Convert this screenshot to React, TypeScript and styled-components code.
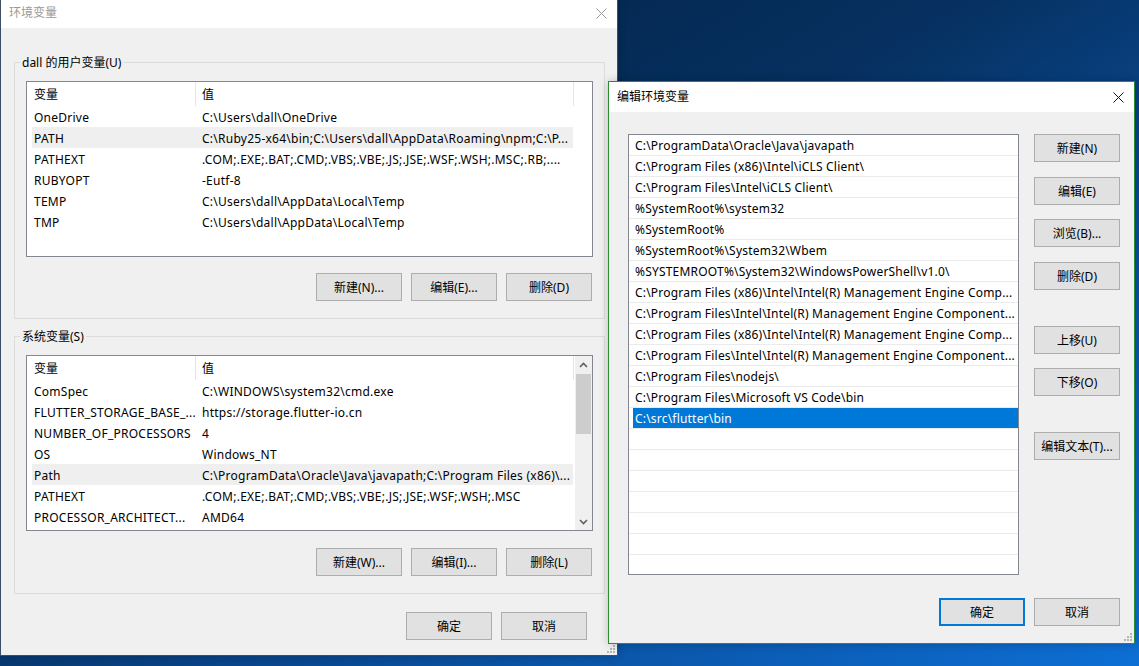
import React, { FC } from "react"
import styled, { createGlobalStyle } from "styled-components"

const GlobalStyle = createGlobalStyle`
  html, body {
    margin: 0;
    padding: 0;
  }
  body {
    font-family: "Noto Sans", "Noto Sans CJK SC", sans-serif;
    font-size: 12px;
    color: #000;
  }
`

const Desktop = styled.div`
  position: relative;
  width: 1139px;
  height: 666px;
  overflow: hidden;
  background: linear-gradient(to bottom right, #031f40 0%, #06305f 42%, #0a4d9a 68%, #0d6fd4 100%);
`

// windows sit on the desktop at their own coordinates
const Window = styled.div<{ $x: number; $y: number; $w: number; $h: number; $active?: boolean }>`
  position: absolute;
  left: ${p => p.$x}px;
  top: ${p => p.$y}px;
  width: ${p => p.$w}px;
  height: ${p => p.$h}px;
  box-sizing: border-box;
  border: 1px solid ${p => (p.$active ? "#2e8b34" : "#3d4f66")};
  background: #f0f0f0;
  display: flex;
  flex-direction: column;
  box-shadow: 0 0 8px rgba(0, 0, 0, 0.22);
`

const TitleBar = styled.div<{ $active?: boolean }>`
  flex: none;
  height: 30px;
  background: #fff;
  display: flex;
  align-items: center;
  justify-content: space-between;
  padding: 0 10px 0 8px;
  color: ${p => (p.$active ? "#000" : "#999")};
`

const Title = styled.span`
  font-size: 12px;
  line-height: 16px;
`

const Grip = styled.svg`
  position: absolute;
  right: 2px;
  bottom: 2px;
`

const LeftBody = styled.div`
  flex: 1;
  display: flex;
  flex-direction: column;
  padding: 26px 12px 0 13px;
`

const Group = styled.fieldset<{ $top: number }>`
  margin: ${p => p.$top}px 0 0 0;
  padding: 11px 11px 17px 11px;
  border: 1px solid #dcdcdc;
  min-width: 0;
`

const GroupLabel = styled.legend`
  margin-left: -6px;
  padding: 1px 2px 0;
  font-size: 12px;
  line-height: 15px;
`

const ListView = styled.div`
  height: 176px;
  box-sizing: border-box;
  border: 1px solid #828790;
  background: #fff;
  display: flex;
  overflow: hidden;
`

const ListArea = styled.div`
  flex: 1;
  min-width: 0;
`

const HeaderRow = styled.div`
  display: flex;
  height: 24px;
`

const HeaderCell = styled.div<{ $w: number; $pad: number }>`
  flex: none;
  width: ${p => p.$w}px;
  box-sizing: border-box;
  padding: 1px 0 0 ${p => p.$pad}px;
  border-right: 1px solid #e5e5e5;
  line-height: 23px;
`

const DataRow = styled.div<{ $hl?: boolean }>`
  display: grid;
  grid-template-columns: 163px 378px;
  width: 541px;
  height: 21px;
  box-sizing: border-box;
  padding-top: 1px;
  margin-left: 5px;
  align-items: center;
  background: ${p => (p.$hl ? "#efefef" : "transparent")};
`

const Cell = styled.div<{ $pad: number }>`
  padding-left: ${p => p.$pad}px;
  letter-spacing: 0.25px;
  white-space: nowrap;
  overflow: hidden;
`

const ScrollBar = styled.div`
  flex: none;
  width: 17px;
  background: #f0f0f0;
  display: flex;
  flex-direction: column;
  align-items: center;
`

const ScrollArrow = styled.div`
  flex: none;
  height: 17px;
  width: 100%;
  display: flex;
  align-items: center;
  justify-content: center;
`

const ScrollTrack = styled.div`
  flex: 1;
  width: 100%;
  display: flex;
  flex-direction: column;
  align-items: center;
`

const ScrollThumb = styled.div`
  margin-top: 1px;
  width: 15px;
  height: 60px;
  background: #cdcdcd;
`

const ButtonRow = styled.div<{ $mt: number; $mr: number }>`
  display: flex;
  justify-content: flex-end;
  gap: 9px;
  margin-top: ${p => p.$mt}px;
  margin-right: ${p => p.$mr}px;
`

const Button = styled.button<{ $default?: boolean; $mt?: number }>`
  flex: none;
  width: 86px;
  height: 28px;
  margin-top: ${p => p.$mt || 0}px;
  box-sizing: border-box;
  padding: 0;
  background: #e1e1e1;
  border: ${p => (p.$default ? "2px solid #0078d7" : "1px solid #adadad")};
  font-family: inherit;
  font-size: 12px;
  color: #000;
  white-space: nowrap;
`

const RightBody = styled.div`
  flex: 1;
  display: flex;
  flex-direction: column;
  padding: 22px 14px 0 19px;
`

const MainRow = styled.div`
  display: flex;
  gap: 15px;
`

const ListBox = styled.div`
  width: 391px;
  height: 441px;
  box-sizing: border-box;
  border: 1px solid #828790;
  background: #fff;
  overflow: hidden;
`

const PathRow = styled.div`
  height: 21px;
  box-sizing: border-box;
  border-bottom: 1px solid #ebebeb;
`

const PathText = styled.div<{ $selected?: boolean }>`
  height: 19px;
  margin-left: 4px;
  padding: 1px 0 0 2px;
  line-height: 20px;
  letter-spacing: 0.2px;
  white-space: nowrap;
  overflow: hidden;
  background: ${p => (p.$selected ? "#0078d7" : "transparent")};
  color: ${p => (p.$selected ? "#fff" : "#000")};
`

const SideButtons = styled.div`
  display: flex;
  flex-direction: column;
`

const CloseIcon: FC<{ color: string }> = ({ color }) => (
  <svg width="11" height="11" viewBox="0 0 11 11">
    <path d="M0.5 0.5 L10.5 10.5 M10.5 0.5 L0.5 10.5" stroke={color} strokeWidth="1" fill="none" />
  </svg>
)

const Chevron: FC<{ up?: boolean }> = ({ up }) => (
  <svg width="9" height="6" viewBox="0 0 9 6">
    <path
      d={up ? "M1 5 L4.5 1.5 L8 5" : "M1 1 L4.5 4.5 L8 1"}
      stroke="#606060"
      strokeWidth="1.6"
      fill="none"
    />
  </svg>
)

const ResizeGrip: FC = () => (
  <Grip width="8" height="8" viewBox="0 0 8 8">
    <g fill="#b4b4b4">
      <rect x="6" y="0" width="2" height="2" />
      <rect x="3" y="3" width="2" height="2" />
      <rect x="6" y="3" width="2" height="2" />
      <rect x="0" y="6" width="2" height="2" />
      <rect x="3" y="6" width="2" height="2" />
      <rect x="6" y="6" width="2" height="2" />
    </g>
  </Grip>
)

type Var = { name: string; value: string; hl?: boolean }

const userVars: Var[] = [
  { name: "OneDrive", value: "C:\\Users\\dall\\OneDrive" },
  { name: "PATH", value: "C:\\Ruby25-x64\\bin;C:\\Users\\dall\\AppData\\Roaming\\npm;C:\\P...", hl: true },
  { name: "PATHEXT", value: ".COM;.EXE;.BAT;.CMD;.VBS;.VBE;.JS;.JSE;.WSF;.WSH;.MSC;.RB;...." },
  { name: "RUBYOPT", value: "-Eutf-8" },
  { name: "TEMP", value: "C:\\Users\\dall\\AppData\\Local\\Temp" },
  { name: "TMP", value: "C:\\Users\\dall\\AppData\\Local\\Temp" },
]

const systemVars: Var[] = [
  { name: "ComSpec", value: "C:\\WINDOWS\\system32\\cmd.exe" },
  { name: "FLUTTER_STORAGE_BASE_...", value: "https://storage.flutter-io.cn" },
  { name: "NUMBER_OF_PROCESSORS", value: "4" },
  { name: "OS", value: "Windows_NT" },
  { name: "Path", value: "C:\\ProgramData\\Oracle\\Java\\javapath;C:\\Program Files (x86)\\...", hl: true },
  { name: "PATHEXT", value: ".COM;.EXE;.BAT;.CMD;.VBS;.VBE;.JS;.JSE;.WSF;.WSH;.MSC" },
  { name: "PROCESSOR_ARCHITECT...", value: "AMD64" },
]

const paths = [
  "C:\\ProgramData\\Oracle\\Java\\javapath",
  "C:\\Program Files (x86)\\Intel\\iCLS Client\\",
  "C:\\Program Files\\Intel\\iCLS Client\\",
  "%SystemRoot%\\system32",
  "%SystemRoot%",
  "%SystemRoot%\\System32\\Wbem",
  "%SYSTEMROOT%\\System32\\WindowsPowerShell\\v1.0\\",
  "C:\\Program Files (x86)\\Intel\\Intel(R) Management Engine Comp...",
  "C:\\Program Files\\Intel\\Intel(R) Management Engine Component...",
  "C:\\Program Files (x86)\\Intel\\Intel(R) Management Engine Comp...",
  "C:\\Program Files\\Intel\\Intel(R) Management Engine Component...",
  "C:\\Program Files\\nodejs\\",
  "C:\\Program Files\\Microsoft VS Code\\bin",
  "C:\\src\\flutter\\bin",
]

const VarList: FC<{ rows: Var[]; scroll?: boolean }> = ({ rows, scroll }) => (
  <ListView>
    <ListArea>
      <HeaderRow>
        <HeaderCell $w={169} $pad={7}>变量</HeaderCell>
        <HeaderCell $w={378} $pad={6}>值</HeaderCell>
      </HeaderRow>
      {rows.map(r => (
        <DataRow key={r.name} $hl={r.hl}>
          <Cell $pad={2}>{r.name}</Cell>
          <Cell $pad={7}>{r.value}</Cell>
        </DataRow>
      ))}
    </ListArea>
    {scroll && (
      <ScrollBar>
        <ScrollArrow><Chevron up /></ScrollArrow>
        <ScrollTrack>
          <ScrollThumb />
        </ScrollTrack>
        <ScrollArrow><Chevron /></ScrollArrow>
      </ScrollBar>
    )}
  </ListView>
)

const EnvDialog: FC = () => (
  <Window $x={0} $y={-3} $w={618} $h={659}>
    <TitleBar>
      <Title>环境变量</Title>
      <CloseIcon color="#9a9a9a" />
    </TitleBar>
    <LeftBody>
      <Group $top={0}>
        <GroupLabel>dall 的用户变量(U)</GroupLabel>
        <VarList rows={userVars} />
        <ButtonRow $mt={16} $mr={1}>
          <Button>新建(N)...</Button>
          <Button>编辑(E)...</Button>
          <Button>删除(D)</Button>
        </ButtonRow>
      </Group>
      <Group $top={9}>
        <GroupLabel>系统变量(S)</GroupLabel>
        <VarList rows={systemVars} scroll />
        <ButtonRow $mt={17} $mr={1}>
          <Button>新建(W)...</Button>
          <Button>编辑(I)...</Button>
          <Button>删除(L)</Button>
        </ButtonRow>
      </Group>
      <ButtonRow $mt={18} $mr={18}>
        <Button>确定</Button>
        <Button>取消</Button>
      </ButtonRow>
    </LeftBody>
    <ResizeGrip />
  </Window>
)

const EditDialog: FC = () => (
  <Window $x={608} $y={81} $w={527} $h={563} $active>
    <TitleBar $active>
      <Title>编辑环境变量</Title>
      <CloseIcon color="#111" />
    </TitleBar>
    <RightBody>
      <MainRow>
        <ListBox>
          {Array.from({ length: 21 }).map((_, i) => (
            <PathRow key={i}>
              <PathText $selected={i === paths.length - 1}>{paths[i] || ""}</PathText>
            </PathRow>
          ))}
        </ListBox>
        <SideButtons>
          <Button>新建(N)</Button>
          <Button $mt={15}>编辑(E)</Button>
          <Button $mt={14}>浏览(B)...</Button>
          <Button $mt={15}>删除(D)</Button>
          <Button $mt={36}>上移(U)</Button>
          <Button $mt={14}>下移(O)</Button>
          <Button $mt={36}>编辑文本(T)...</Button>
        </SideButtons>
      </MainRow>
      <ButtonRow $mt={23} $mr={0}>
        <Button $default>确定</Button>
        <Button>取消</Button>
      </ButtonRow>
    </RightBody>
    <ResizeGrip />
  </Window>
)

const App: FC = () => {
  return (
    <>
      <GlobalStyle />
      <Desktop>
        <EnvDialog />
        <EditDialog />
      </Desktop>
    </>
  )
}

export default App
